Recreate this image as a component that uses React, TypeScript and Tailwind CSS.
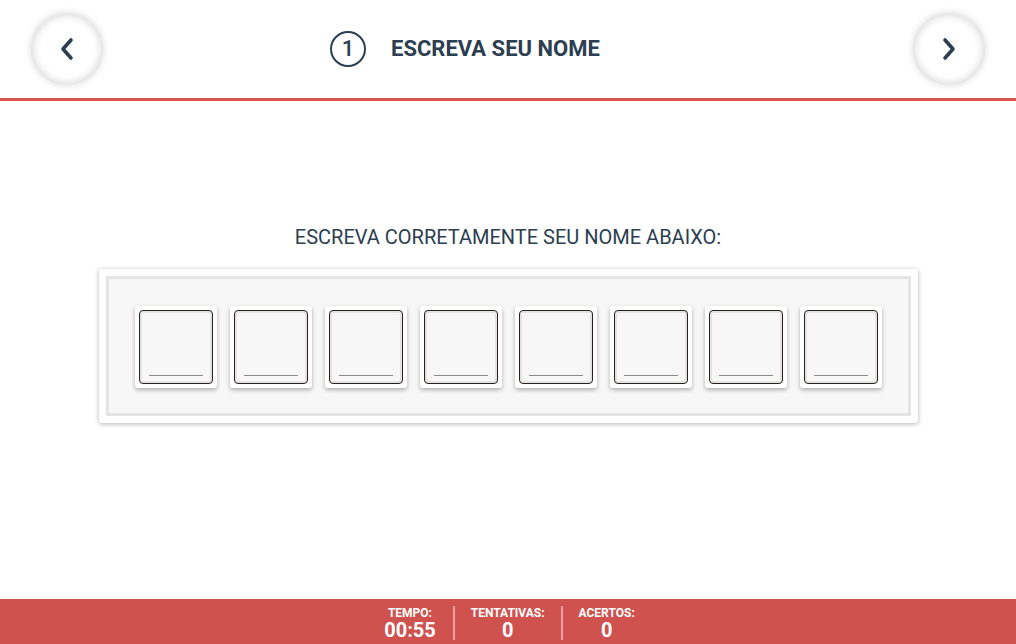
import type { FC, ReactElement } from 'react';
import React from 'react';

const NavButton: FC<{ dir: 'left' | 'right' }> = ({ dir }): ReactElement => {
  return (
    <button
      type="button"
      className="flex h-[72px] w-[72px] items-center justify-center rounded-full bg-white shadow-[0_0_6px_1px_rgba(0,0,0,0.12),inset_0_0_7px_3px_rgba(0,0,0,0.12)]"
    >
      <svg width="20" height="26" viewBox="0 0 20 26" fill="none">
        <path
          d={dir === 'left' ? 'M14 4 L6 13 L14 22' : 'M6 4 L14 13 L6 22'}
          stroke="#2c3e50"
          strokeWidth="3.6"
          strokeLinecap="round"
          strokeLinejoin="round"
        />
      </svg>
    </button>
  );
};

const LetterTile: FC = (): ReactElement => {
  return (
    <div className="h-[82px] w-[82px] rounded-[3px] bg-white p-[4px] shadow-[0_2px_4px_rgba(0,0,0,0.3)]">
      <div className="flex h-full w-full items-end justify-center rounded-[4px] border border-[#2a1f1a] bg-[#f7f7f7] pb-[7px] shadow-[inset_0_0_0_2px_#e4e4e4]">
        <div className="h-px w-[54px] bg-[#8a8a8a]" />
      </div>
    </div>
  );
};

const Stat: FC<{ label: string; value: string; first?: boolean }> = ({
  label,
  value,
  first,
}): ReactElement => {
  return (
    <div
      className={
        first
          ? 'flex h-[34px] flex-col items-center justify-center px-[17px]'
          : 'flex h-[34px] flex-col items-center justify-center border-l-2 border-[#e8a3a1] px-[16px]'
      }
    >
      <span className="text-[12px] font-bold leading-[14px]">{label}</span>
      <span className="text-[20px] font-bold leading-[20px]">{value}</span>
    </div>
  );
};

const App: FC = (): ReactElement => {
  const tiles = [0, 1, 2, 3, 4, 5, 6, 7];
  return (
    <div className="flex h-[644px] w-[1016px] flex-col bg-white font-['Roboto',sans-serif] text-[#2c3e50]">
      <header className="flex h-[101px] shrink-0 items-center border-b-[3px] border-[#d9534f] px-[31px] pb-[1px]">
        <NavButton dir="left" />
        <div className="ml-[227px] flex items-center">
          <div className="flex h-[36px] w-[36px] items-center justify-center rounded-full border-2 border-[#2c3e50] text-[22px] font-medium leading-none">
            1
          </div>
          <h1 className="ml-[25px] text-[22px] font-bold leading-[26px]">ESCREVA SEU NOME</h1>
        </div>
        <div className="flex-1" />
        <NavButton dir="right" />
      </header>

      <main className="flex flex-1 flex-col items-center pt-[124px]">
        <p className="text-[20px] leading-[24px]">
          ESCREVA CORRETAMENTE SEU NOME ABAIXO:
        </p>
        <div className="mt-[20px] rounded-[3px] bg-white p-[7px] shadow-[0_1px_5px_rgba(0,0,0,0.3)]">
          <div className="flex gap-[13px] border-[3px] border-[#e4e4e4] bg-[#f7f7f7] px-[26px] pb-[25px] pt-[27px]">
            {tiles.map((t) => (
              <LetterTile key={t} />
            ))}
          </div>
        </div>
      </main>

      <footer className="flex h-[45px] shrink-0 items-center justify-center bg-[#cf524f] pl-[2px] pt-[3px] text-white">
        <Stat label="TEMPO:" value="00:55" first />
        <Stat label="TENTATIVAS:" value="0" />
        <Stat label="ACERTOS:" value="0" />
      </footer>
    </div>
  );
};

export default App;
